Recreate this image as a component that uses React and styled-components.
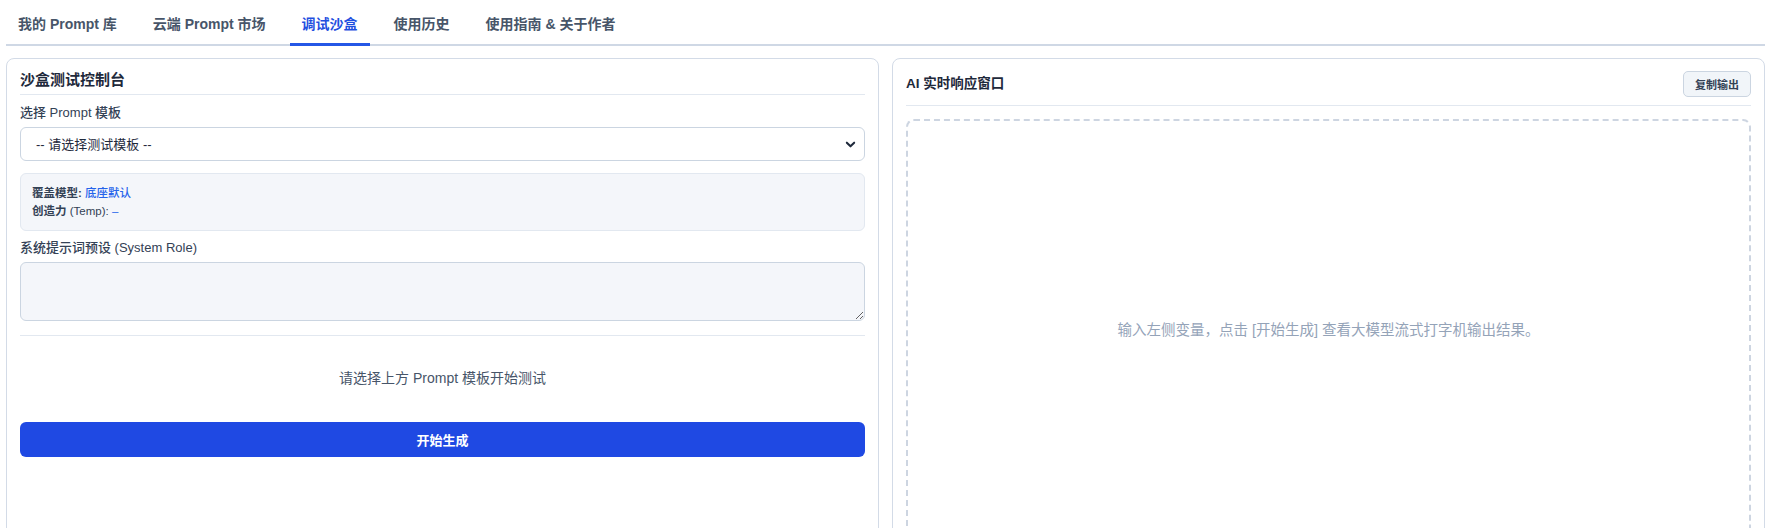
import React from "react";
import styled, { createGlobalStyle } from "styled-components";

const Global = createGlobalStyle`
  * { box-sizing: border-box; }
  html, body { margin: 0; padding: 0; background: #ffffff; }
  body {
    font-family: "Liberation Sans", "Noto Sans CJK SC", sans-serif;
    color: #1e293b;
    -webkit-font-smoothing: antialiased;
  }
`;

const Page = styled.div`
  padding: 0 11px 0 6px;
`;

const TabBar = styled.nav`
  display: flex;
  gap: 12px;
  border-bottom: 2px solid #cfd8e5;
  height: 46px;
`;

const Tab = styled.div`
  padding: 15px 12px 10px;
  line-height: 18px;
  font-size: 14px;
  font-weight: 700;
  color: ${(p) => (p.$active ? "#1f4fe0" : "#475569")};
  border-bottom: 3px solid ${(p) => (p.$active ? "#2457e6" : "transparent")};
  margin-bottom: -2px;
  height: 46px;
  white-space: nowrap;
`;

const Columns = styled.div`
  display: grid;
  grid-template-columns: 1fr 1fr;
  gap: 13px;
  margin-top: 12px;
`;

const Panel = styled.section`
  border: 1px solid #d3dbe7;
  border-radius: 8px;
  padding: 12px 13px 13px;
  display: flex;
  flex-direction: column;
  background: #fff;
`;

const PanelHead = styled.div`
  display: flex;
  align-items: center;
  justify-content: space-between;
  border-bottom: 1px solid #e2e8f0;
  padding-bottom: ${(p) => p.$pb || "5px"};
`;

const PanelTitle = styled.h2`
  margin: 0;
  font-size: ${(p) => p.$size || "15px"};
  line-height: 18px;
  font-weight: ${(p) => p.$weight || 700};
  color: #1e293b;
`;

const Label = styled.label`
  display: block;
  margin-top: ${(p) => p.$mt || "10px"};
  margin-bottom: 6px;
  font-size: 13px;
  line-height: 16px;
  font-weight: 500;
  color: #334155;
`;

const SelectWrap = styled.div`
  position: relative;
  height: 34px;
`;

const Select = styled.select`
  appearance: none;
  -webkit-appearance: none;
  width: 100%;
  height: 34px;
  border: 1px solid #cbd5e1;
  border-radius: 6px;
  background: #ffffff;
  padding: 0 32px 0 15px;
  font-family: inherit;
  font-size: 13px;
  color: #1e293b;
  outline: none;
`;

const Chevron = styled.svg`
  position: absolute;
  right: 9px;
  top: 12px;
  width: 11px;
  height: 11px;
  pointer-events: none;
`;

const InfoBox = styled.div`
  margin-top: 12px;
  background: #f4f6fa;
  border: 1px solid #e2e8f0;
  border-radius: 6px;
  padding: 10px 11px;
  font-size: 11.5px;
  line-height: 18px;
  font-weight: 500;
  color: #334155;
`;

const Key = styled.span`
  font-weight: 700;
`;

const Accent = styled.span`
  color: #2563eb;
  font-weight: 500;
`;

const TextArea = styled.textarea`
  display: block;
  width: 100%;
  height: 59px;
  background: #f4f6fa;
  border: 1px solid #cbd5e1;
  border-radius: 6px;
  resize: vertical;
  font-family: inherit;
  outline: none;
`;

const Divider = styled.hr`
  border: 0;
  border-top: 1px solid #e2e8f0;
  margin: 14px 0 0;
`;

const Hint = styled.p`
  margin: 0;
  padding: 32px 0 34px;
  text-align: center;
  font-size: 14px;
  line-height: 20px;
  color: #475569;
`;

const PrimaryButton = styled.button`
  width: 100%;
  height: 35px;
  border: 0;
  border-radius: 6px;
  background: #1f49e3;
  color: #ffffff;
  font-family: inherit;
  font-size: 13px;
  font-weight: 700;
`;

const GhostButton = styled.button`
  height: 26px;
  padding: 0 11px;
  border: 1px solid #cbd5e1;
  border-radius: 5px;
  background: #f1f5f9;
  color: #334155;
  font-family: inherit;
  font-size: 11px;
  font-weight: 700;
`;

const Output = styled.div`
  margin-top: 13px;
  min-height: 418px;
  border: 2px dashed #cdd5e1;
  border-radius: 8px;
  display: flex;
  align-items: center;
  justify-content: center;
  font-size: 14.5px;
  color: #94a3b8;
`;

const tabs = [
  "我的 Prompt 库",
  "云端 Prompt 市场",
  "调试沙盒",
  "使用历史",
  "使用指南 & 关于作者",
];

export default function App() {
  return (
    <Page>
      <Global />
      <TabBar>
        {tabs.map((t, i) => (
          <Tab key={t} $active={i === 2}>
            {t}
          </Tab>
        ))}
      </TabBar>
      <Columns>
        <Panel>
          <PanelHead>
            <PanelTitle>沙盒测试控制台</PanelTitle>
          </PanelHead>
          <Label>选择 Prompt 模板</Label>
          <SelectWrap>
            <Select defaultValue="">
              <option value="">-- 请选择测试模板 --</option>
            </Select>
            <Chevron viewBox="0 0 12 12">
              <path
                d="M2 4l4 4 4-4"
                fill="none"
                stroke="#1e293b"
                strokeWidth="2.2"
                strokeLinecap="round"
                strokeLinejoin="round"
              />
            </Chevron>
          </SelectWrap>
          <InfoBox>
            <div>
              <Key>覆盖模型:</Key> <Accent>底座默认</Accent>
            </div>
            <div>
              <Key>创造力</Key> (Temp): <Accent>–</Accent>
            </div>
          </InfoBox>
          <Label $mt="9px">系统提示词预设 (System Role)</Label>
          <TextArea />
          <Divider />
          <Hint>请选择上方 Prompt 模板开始测试</Hint>
          <PrimaryButton>开始生成</PrimaryButton>
        </Panel>
        <Panel>
          <PanelHead $pb="8px">
            <PanelTitle $size="13.5px" $weight={600}>AI 实时响应窗口</PanelTitle>
            <GhostButton>复制输出</GhostButton>
          </PanelHead>
          <Output>输入左侧变量，点击 [开始生成] 查看大模型流式打字机输出结果。</Output>
        </Panel>
      </Columns>
    </Page>
  );
}
